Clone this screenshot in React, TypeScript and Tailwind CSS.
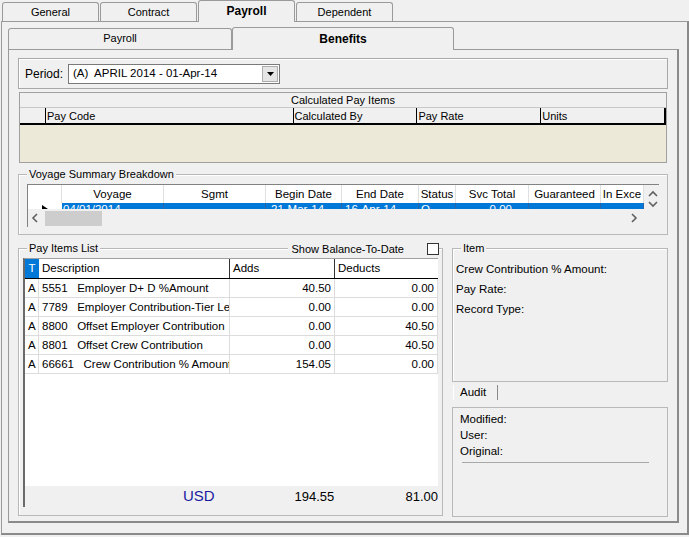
import type { ReactNode } from 'react';

const FONT = "font-['Liberation_Sans',Arial,sans-serif]";

function Tab({ label, width, active }: { label: string; width: string; active?: boolean }) {
  return (
    <div
      className={
        active
          ? `relative z-10 -mb-px h-[22px] ${width} rounded-t-[3px] border border-b-0 border-[#9a9a9a] bg-[#f0f0f0] text-center font-bold text-[12px] leading-[20px]`
          : `h-[19px] ${width} rounded-t-[3px] border border-b-0 border-[#9a9a9a] bg-[#f0f0f0] text-center text-[11px] leading-[18px]`
      }
    >
      {label}
    </div>
  );
}

function GroupBox({
  label,
  className,
  extra,
  children,
}: {
  label: string;
  className: string;
  extra?: ReactNode;
  children?: ReactNode;
}) {
  return (
    <div className={`relative border border-[#b8b8b8] shadow-[inset_1px_1px_0_#fff] ${className}`}>
      <div className="absolute -top-[8px] left-[8px] bg-[#f0f0f0] px-[2px] leading-[14px]">{label}</div>
      {extra}
      {children}
    </div>
  );
}

function Chevron({ dir }: { dir: 'l' | 'r' | 'u' | 'd' }) {
  const pts = { l: '6,1 2,5 6,9', r: '2,1 6,5 2,9', u: '1,6 5,2 9,6', d: '1,2 5,6 9,2' }[dir];
  const box = dir === 'l' || dir === 'r' ? '0 0 8 10' : '0 0 10 8';
  return (
    <svg viewBox={box} className={dir === 'l' || dir === 'r' ? 'h-[10px] w-[8px]' : 'h-[8px] w-[10px]'}>
      <polyline points={pts} fill="none" stroke="#606060" strokeWidth="1.6" />
    </svg>
  );
}

const voyageCols = [
  { label: 'Voyage', w: 'w-[102px]', val: '04/01/2014', align: 'text-left pl-[1px]' },
  { label: 'Sgmt', w: 'w-[102px]', val: '', align: 'text-left' },
  { label: 'Begin Date', w: 'w-[76px]', val: '21-Mar-14', align: 'text-left pl-[5px]' },
  { label: 'End Date', w: 'w-[77px]', val: '16-Apr-14', align: 'text-left pl-[3px]' },
  { label: 'Status', w: 'w-[37px]', val: 'O', align: 'text-left pl-[2px]' },
  { label: 'Svc Total', w: 'w-[73px]', val: '0.00', align: 'text-right pr-[16px]' },
  { label: 'Guaranteed', w: 'w-[72px]', val: '', align: 'text-left' },
  { label: 'In Exce', w: 'w-[43px]', val: '', align: 'text-left' },
];

const payItems = [
  { t: 'A', desc: '5551   Employer D+ D %Amount', adds: '40.50', deducts: '0.00' },
  { t: 'A', desc: '7789   Employer Contribution-Tier Level', adds: '0.00', deducts: '0.00' },
  { t: 'A', desc: '8800   Offset Employer Contribution', adds: '0.00', deducts: '40.50' },
  { t: 'A', desc: '8801   Offset Crew Contribution', adds: '0.00', deducts: '40.50' },
  { t: 'A', desc: '66661   Crew Contribution % Amount', adds: '154.05', deducts: '0.00' },
];

export default function App() {
  return (
    <div className={`h-[537px] w-[689px] overflow-hidden bg-[#f0f0f0] text-[11px] text-black ${FONT}`}>
      {/* top tabs */}
      <div className="flex h-[21px] items-end gap-[1px] pl-[2px]">
        <Tab label="General" width="w-[97px]" />
        <Tab label="Contract" width="w-[97px]" />
        <Tab label="Payroll" width="w-[97px]" active />
        <Tab label="Dependent" width="w-[97px]" />
      </div>

      <div className="ml-[1px] h-[514px] w-[688px] border border-[#9a9a9a] border-r-2 border-b-2 border-r-[#8a8a8a] border-b-[#8a8a8a] pl-[6px] pt-[5px]">
        {/* inner tabs */}
        <div className="flex h-[22px] items-end">
          <div className="h-[21px] w-[224px] rounded-t-[3px] border border-b-0 border-[#9a9a9a] text-center text-[11px] leading-[19px]">
            Payroll
          </div>
          <div className="relative z-10 -mb-px h-[23px] w-[222px] rounded-t-[3px] border border-b-0 border-[#9a9a9a] bg-[#f0f0f0] text-center text-[12px] font-bold leading-[22px]">
            Benefits
          </div>
        </div>

        <div className="h-[474px] w-[671px] border border-[#9a9a9a] border-r-2 border-b-2 border-r-[#8a8a8a] border-b-[#8a8a8a] pl-[9px] pt-[8px]">
          {/* period */}
          <div className="flex h-[31px] w-[650px] items-center border border-[#a8a8a8] shadow-[inset_1px_1px_0_#fff] pl-[6px]">
            <span className="text-[12px]">Period:</span>
            <div className="ml-[5px] flex h-[20px] w-[212px] items-center border border-[#7a7a7a] bg-white pl-[4px]">
              <span className="flex-1 whitespace-pre text-[11.5px]">(A)  APRIL 2014 - 01-Apr-14</span>
              <div className="mr-[1px] flex h-[16px] w-[16px] items-center justify-center border border-[#adadad] bg-[#e5e5e5]">
                <svg viewBox="0 0 7 4" className="h-[4px] w-[7px]">
                  <polygon points="0,0 7,0 3.5,4" fill="#000" />
                </svg>
              </div>
            </div>
          </div>

          {/* calculated pay items */}
          <div className="ml-[1px] mt-[3px] flex h-[71px] w-[648px] flex-col border border-[#a0a0a0]">
            <div className="h-[15px] border-b border-[#c8c8c8] text-center leading-[15px]">Calculated Pay Items</div>
            <div className="flex h-[17px] border-b-2 border-black">
              <div className="w-[26px] border-r border-black" />
              <div className="w-[248px] border-r border-black pl-[1px] leading-[16px]">Pay Code</div>
              <div className="w-[124px] border-r border-black pl-[1px] leading-[16px]">Calculated By</div>
              <div className="w-[124px] border-r border-black pl-[1px] leading-[16px]">Pay Rate</div>
              <div className="w-[125px] border-r-2 border-black pl-[1px] leading-[16px]">Units</div>
            </div>
            <div className="flex-1 bg-[#ece9d8]" />
          </div>

          {/* voyage summary */}
          <GroupBox label="Voyage Summary Breakdown" className="mt-[11px] h-[61px] w-[650px]">
            <div className="ml-[8px] mt-[9px] flex h-[43px] w-[632px] flex-col border-l border-t border-[#828282] bg-[#f0f0f0]">
              <div className="flex">
                <div className="flex w-[616px] flex-col bg-white">
                  <div className="flex h-[18px]">
                    <div className="w-[34px] border-r border-[#e0e0e0]" />
                    {voyageCols.map((c) => (
                      <div
                        key={c.label}
                        className={`${c.w} overflow-hidden whitespace-nowrap border-r border-[#e0e0e0] text-center text-[11.5px] leading-[18px]`}
                      >
                        {c.label}
                      </div>
                    ))}
                  </div>
                  <div className="flex h-[6px] overflow-hidden">
                    <div className="relative w-[34px] bg-white">
                      <svg viewBox="0 0 6 8" className="absolute left-[14px] top-[2px] h-[8px] w-[6px]">
                        <polygon points="0,0 6,4 0,8" fill="#000" />
                      </svg>
                    </div>
                    {voyageCols.map((c) => (
                      <div
                        key={c.label}
                        className={`${c.w} overflow-hidden whitespace-nowrap border-r border-[#2a64a8] bg-[#0078d7] text-[11.5px] leading-[12px] text-white ${c.align}`}
                      >
                        {c.val}
                      </div>
                    ))}
                  </div>
                </div>
                <div className="flex h-[24px] w-[15px] flex-col items-center justify-between bg-[#f0f0f0] pb-[1px] pl-[2px] pt-[5px]">
                  <Chevron dir="u" />
                  <Chevron dir="d" />
                </div>
              </div>
              <div className="flex h-[18px] w-[616px] items-center">
                <div className="flex w-[13px] justify-center">
                  <Chevron dir="l" />
                </div>
                <div className="ml-[4px] h-[15px] w-[57px] bg-[#cdcdcd]" />
                <div className="flex-1" />
                <div className="mr-[4px] flex w-[13px] justify-center">
                  <Chevron dir="r" />
                </div>
              </div>
            </div>
          </GroupBox>

          <div className="mt-[13px] flex gap-[9px]">
            {/* pay items list */}
            <GroupBox
              label="Pay Items List"
              className="h-[268px] w-[425px]"
              extra={
                <div className="absolute -top-[7px] right-[3px] flex items-center bg-[#f0f0f0] pl-[3px]">
                  <span className="leading-[14px]">Show Balance-To-Date</span>
                  <div className="ml-[23px] h-[12px] w-[12px] border border-[#333] bg-white" />
                </div>
              }
            >
              <div className="ml-[4px] mt-[9px] flex h-[249px] w-[415px] flex-col border-l-2 border-t border-l-[#6a6a6a] border-t-[#a0a0a0] bg-white">
                <div className="flex h-[20px] border-b border-black text-[11.5px]">
                  <div className="flex w-[14px] items-center justify-center bg-[#0078d7] text-white">T</div>
                  <div className="w-[191px] border-r border-[#333] pl-[3px] leading-[19px]">Description</div>
                  <div className="w-[105px] border-r border-[#333] pl-[3px] leading-[19px]">Adds</div>
                  <div className="w-[103px] pl-[3px] leading-[19px]">Deducts</div>
                </div>
                {payItems.map((r) => (
                  <div key={r.desc} className="flex h-[19px] border-b border-[#dcdcdc] text-[11.5px] leading-[18px]">
                    <div className="w-[14px] border-r border-[#dcdcdc] pl-[3px]">{r.t}</div>
                    <div className="w-[191px] overflow-hidden whitespace-pre border-r border-[#dcdcdc] pl-[3px]">{r.desc}</div>
                    <div className="w-[105px] border-r border-[#dcdcdc] pr-[3px] text-right">{r.adds}</div>
                    <div className="w-[103px] border-r border-[#dcdcdc] pr-[3px] text-right">{r.deducts}</div>
                  </div>
                ))}
                <div className="flex-1" />
                <div className="flex h-[21px] items-center bg-[#f0f0f0]">
                  <div className="w-[191px] pr-[1px] text-right text-[15px] text-[#1a1aa0]">USD</div>
                  <div className="w-[119px] text-right text-[13px]">194.55</div>
                  <div className="w-[104px] text-right text-[13px]">81.00</div>
                </div>
              </div>
            </GroupBox>

            {/* item / audit */}
            <div className="flex w-[216px] flex-col">
              <GroupBox label="Item" className="h-[134px] w-[216px]">
                <div className="flex flex-col pl-[3px] pt-[10px] text-[11.5px] leading-[20px]">
                  <span>Crew Contribution % Amount:</span>
                  <span>Pay Rate:</span>
                  <span>Record Type:</span>
                </div>
              </GroupBox>
              <div className="ml-[1px] mt-[3px] flex h-[15px] w-[45px] items-center border-l border-r border-l-white border-r-[#8a8a8a] pl-[6px] text-[11.5px]">
                Audit
              </div>
              <div className="mt-[7px] flex h-[110px] w-[216px] flex-col border border-[#b8b8b8] pl-[7px] pt-[3px] text-[11.5px] leading-[16px]">
                <span>Modified:</span>
                <span>User:</span>
                <span>Original:</span>
                <div className="ml-[2px] mt-[3px] h-px w-[187px] bg-[#a8a8a8]" />
              </div>
            </div>
          </div>
        </div>
      </div>
    </div>
  );
}
